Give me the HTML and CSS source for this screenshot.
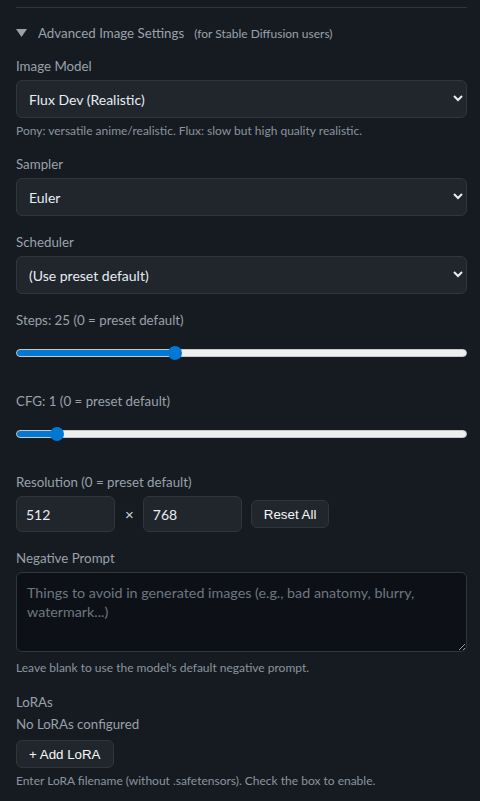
FILE: index.html
```html
<!DOCTYPE html>
<html lang="en">
<head>
<meta charset="utf-8">
<title>Advanced Image Settings</title>
<link rel="stylesheet" href="styles.css">
</head>
<body>
<div class="panel">
  <hr class="divider">
  <details class="adv" open>
    <summary class="adv-summary">
      <svg class="caret" width="11" height="8" viewBox="0 0 11 8"><polygon points="0,0 11,0 5.5,8" fill="#9aa1aa"/></svg>
      <span class="adv-title">Advanced Image Settings</span>
      <span class="adv-sub">(for Stable Diffusion users)</span>
    </summary>

    <div class="field first">
      <label class="label">Image Model</label>
      <div class="select-wrap">
        <select class="select"><option>Flux Dev (Realistic)</option></select>
        <svg class="chev" width="10" height="7" viewBox="0 0 10 7"><polyline points="1,1 5,5 9,1" fill="none" stroke="#e6edf3" stroke-width="2"/></svg>
      </div>
      <div class="hint hint-after-select">Pony: versatile anime/realistic. Flux: slow but high quality realistic.</div>
    </div>

    <div class="field after-hint">
      <label class="label">Sampler</label>
      <div class="select-wrap">
        <select class="select"><option>Euler</option></select>
        <svg class="chev" width="10" height="7" viewBox="0 0 10 7"><polyline points="1,1 5,5 9,1" fill="none" stroke="#e6edf3" stroke-width="2"/></svg>
      </div>
    </div>

    <div class="field">
      <label class="label">Scheduler</label>
      <div class="select-wrap">
        <select class="select"><option>(Use preset default)</option></select>
        <svg class="chev" width="10" height="7" viewBox="0 0 10 7"><polyline points="1,1 5,5 9,1" fill="none" stroke="#e6edf3" stroke-width="2"/></svg>
      </div>
    </div>

    <div class="field">
      <label class="label">Steps: 25 (0 = preset default)</label>
      <input class="range" type="range" min="1" max="70" value="25" style="--pct: 35%">
    </div>

    <div class="field after-range">
      <label class="label">CFG: 1 (0 = preset default)</label>
      <input class="range" type="range" min="0" max="13" value="1" style="--pct: 9%">
    </div>

    <div class="field after-range">
      <label class="label">Resolution (0 = preset default)</label>
      <div class="res-row">
        <input class="num" type="text" value="512">
        <span class="times">×</span>
        <input class="num" type="text" value="768">
        <button class="btn" type="button">Reset All</button>
      </div>
    </div>

    <div class="field">
      <label class="label">Negative Prompt</label>
      <textarea class="textarea" placeholder="Things to avoid in generated images (e.g., bad anatomy, blurry, watermark...)"></textarea>
      <div class="hint hint-after-area">Leave blank to use the model's default negative prompt.</div>
    </div>

    <div class="field">
      <label class="label">LoRAs</label>
      <div class="empty">No LoRAs configured</div>
      <button class="btn add-btn" type="button">+ Add LoRA</button>
      <div class="hint hint-after-btn">Enter LoRA filename (without .safetensors). Check the box to enable.</div>
    </div>
  </details>
</div>
</body>
</html>
```
FILE: styles.css
```css
html, body {
  margin: 0;
  padding: 0;
  background: #161b22;
}
body {
  font-family: Lato, "Open Sans", sans-serif;
  color: #c9d1d9;
  width: 480px;
  height: 801px;
  overflow: hidden;
}
.panel {
  padding: 7px 13px 0 16px;
}
.divider {
  margin: 0;
  border: 0;
  border-top: 1px solid #30363d;
  height: 0;
}
.adv-summary {
  list-style: none;
  display: flex;
  align-items: center;
  margin-top: 16px;
  height: 18px;
  cursor: pointer;
}
.adv-summary::-webkit-details-marker { display: none; }
.caret { display: block; margin-right: 11px; }
.adv-title {
  font-size: 13.3px;
  color: #9aa1aa;
}
.adv-sub {
  font-size: 12px;
  color: #9aa1aa;
  margin-left: 10px;
}
.field { margin-top: 16px; }
.field.first { margin-top: 14px; }
.field.after-hint { margin-top: 15px; }
.field.after-range { margin-top: 31px; }
.label {
  display: block;
  font-size: 13.3px;
  line-height: 20px;
  color: #9aa1aa;
  margin-bottom: 4px;
}
.select-wrap {
  position: relative;
}
.select {
  appearance: none;
  -webkit-appearance: none;
  display: block;
  width: 100%;
  height: 38px;
  box-sizing: border-box;
  background: #21262d;
  border: 1px solid #30363d;
  border-radius: 6px;
  color: #e6edf3;
  font-family: Lato, "Open Sans", sans-serif;
  font-size: 14px;
  padding: 0 30px 0 12px;
  margin: 0;
}
.chev {
  position: absolute;
  right: 4px;
  top: 15px;
  pointer-events: none;
}
.hint {
  font-size: 12px;
  line-height: 16px;
  color: #8b949e;
}
.hint-after-select { margin-top: 5px; }
.hint-after-area { margin-top: 8px; }
.hint-after-btn { margin-top: 5px; }
.range {
  -webkit-appearance: none;
  appearance: none;
  display: block;
  width: 100%;
  height: 14px;
  margin: 16px 0 0 0;
  background: transparent;
}
.range::-webkit-slider-runnable-track {
  height: 8px;
  border-radius: 4px;
  box-sizing: border-box;
  border: 1px solid #c8c8c8;
  background: linear-gradient(to right, #0078d4 0, #0078d4 var(--pct), #efefef var(--pct), #efefef 100%);
}
.range::-webkit-slider-thumb {
  -webkit-appearance: none;
  appearance: none;
  width: 14px;
  height: 14px;
  border-radius: 50%;
  background: #0078d4;
  border: 0;
  margin-top: -4px;
}
.res-row {
  display: flex;
  align-items: center;
}
.num {
  box-sizing: border-box;
  width: 99px;
  height: 36px;
  margin: 0;
  background: #21262d;
  border: 1px solid #30363d;
  border-radius: 6px;
  color: #e6edf3;
  font-family: Lato, "Open Sans", sans-serif;
  font-size: 14px;
  padding: 0 9px;
}
.times {
  font-family: "Liberation Sans", Arial, sans-serif;
  font-size: 15px;
  color: #c9d1d9;
  margin: 0 9px 0 10px;
}
.btn {
  box-sizing: border-box;
  height: 28px;
  background: #21262d;
  border: 1px solid #30363d;
  border-radius: 6px;
  color: #f6f8fa;
  font-family: "Liberation Sans", Arial, sans-serif;
  font-size: 13.33px;
  padding: 0 12px;
  margin: 0 0 0 9px;
}
.textarea {
  display: block;
  box-sizing: border-box;
  width: 100%;
  height: 80px;
  margin: 0;
  background: #0d1117;
  border: 1px solid #30363d;
  border-radius: 6px;
  color: #e6edf3;
  font-family: Lato, "Open Sans", sans-serif;
  font-size: 14.3px;
  line-height: 19px;
  padding: 10px 10px;
  resize: vertical;
}
.textarea::placeholder { color: #6e7681; }
.empty {
  font-size: 13.3px;
  line-height: 20px;
  color: #9aa1aa;
  margin-top: -2px;
}
.add-btn {
  display: block;
  margin: 6px 0 0 0;
}
```
